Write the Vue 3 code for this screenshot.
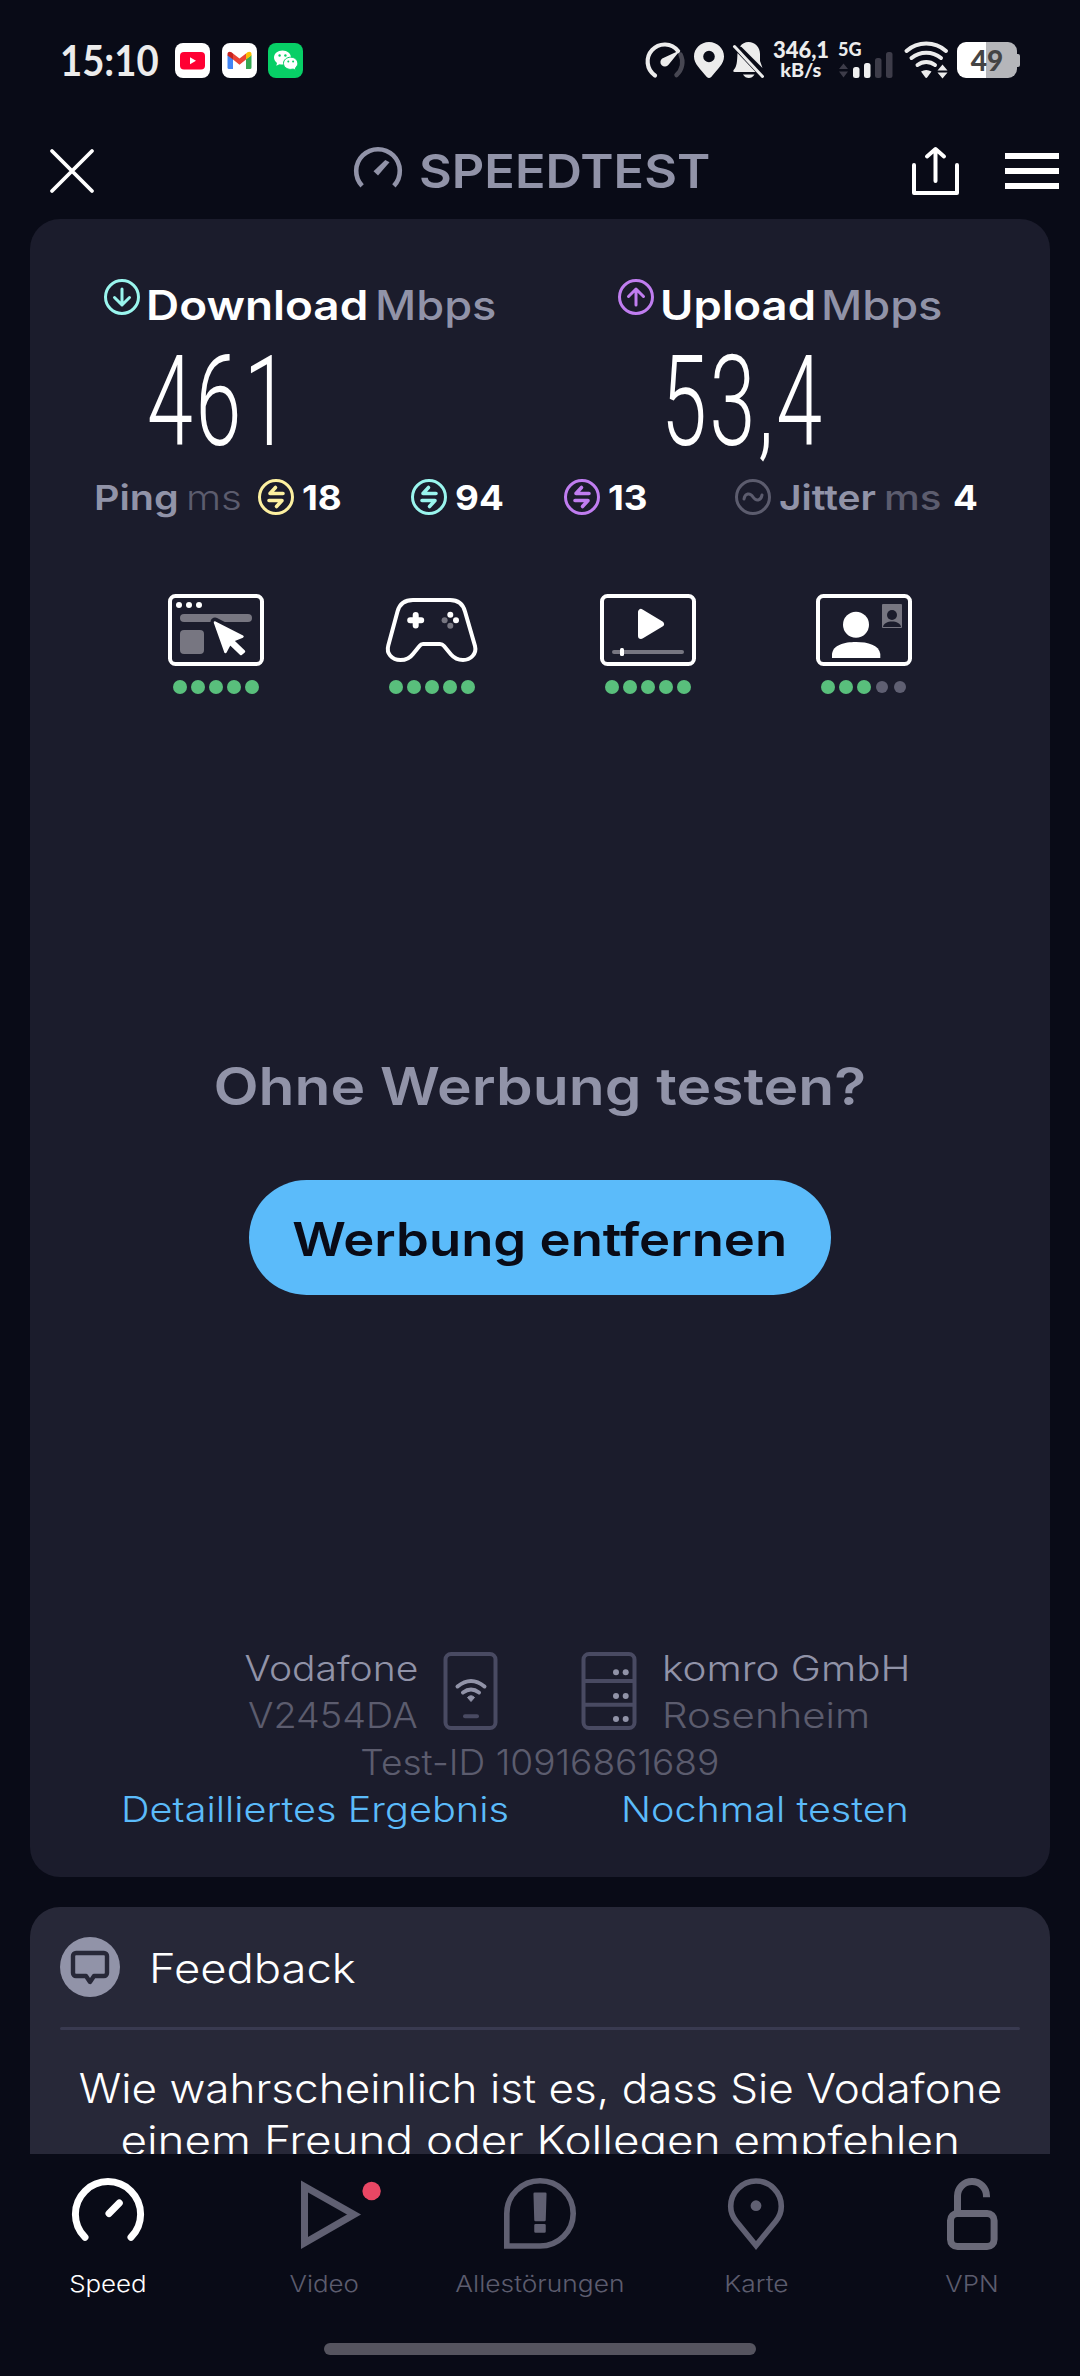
<template>
  <div class="app-root">
    <!-- Status bar -->
    <header class="status-bar">
      <span class="clock t">15:10</span>
      <div class="notifications">
        <svg class="app-icon" viewBox="0 0 35 35">
          <rect width="35" height="35" rx="8" fill="#fff" />
          <rect x="5" y="9" width="25" height="17.5" rx="4" fill="#ff0033" />
          <path d="M15 14.2L21 17.7L15 21.2Z" fill="#fff" />
        </svg>
        <svg class="app-icon" viewBox="0 0 35 35">
          <rect width="35" height="35" rx="8" fill="#fff" />
          <path d="M5.5 12V24.5a1.5 1.5 0 0 0 1.5 1.5H11V16Z" fill="#4285f4" />
          <path d="M29.5 12V24.5a1.5 1.5 0 0 1-1.5 1.5H24V16Z" fill="#34a853" />
          <path d="M11 16.5V10.5L17.5 15.5L24 10.5V16.5L17.5 21.8Z" fill="#ea4335" />
          <path d="M5.5 12.5V11C5.5 8.6 8 8.2 9.5 9.3L11 10.5V16.5Z" fill="#c5221f" />
          <path d="M29.5 12.5V11C29.5 8.6 27 8.2 25.5 9.3L24 10.5V16.5Z" fill="#fbbc04" />
        </svg>
        <svg class="app-icon" viewBox="0 0 35 35">
          <rect width="35" height="35" rx="8" fill="#07cf66" />
          <path d="M14.5 7.5C9.8 7.5 6 10.6 6 14.6c0 2.2 1.2 4.1 3 5.4L8.3 22.8L11.5 21.2c1 .3 2 .4 3 .4 4.7 0 8.5-3 8.5-7S19.2 7.5 14.5 7.5Z" fill="#fff" />
          <path d="M22.7 14.2c-4 0-7.2 2.7-7.2 6.1s3.2 6.1 7.2 6.1c.9 0 1.7-.1 2.5-.3L27.9 27.4L27.3 25c1.5-1.1 2.5-2.8 2.5-4.7 0-3.4-3.2-6.1-7.1-6.1Z" fill="#fff" stroke="#07cf66" />
          <g fill="#07cf66">
            <circle cx="11.6" cy="12.5" r="1.2" /><circle cx="17.4" cy="12.5" r="1.2" />
            <circle cx="20.3" cy="18.6" r="1" /><circle cx="25.1" cy="18.6" r="1" />
          </g>
        </svg>
      </div>

      <div class="system-icons">
        <svg class="sys-gauge" viewBox="0 0 39 36">
          <path d="M34.5 12.5A17 17 0 0 1 30.5 33" fill="none" stroke="#474752" stroke-width="4.5" stroke-linecap="round" />
          <path d="M9 33.5A17 17 0 1 1 32 9" fill="none" stroke="#ececec" stroke-width="4.2" stroke-linecap="round" />
          <path d="M34.5 8L22.5 22.8A4.5 4.5 0 1 1 16.2 16.5Z" fill="#ececec" />
        </svg>
        <svg class="sys-pin" viewBox="0 0 30 36">
          <path fill-rule="evenodd" d="M15 0C6.7 0 0 6.5 0 14.5C0 22 6.5 27 12.8 35Q15 37.2 17.2 35C23.5 27 30 22 30 14.5C30 6.5 23.3 0 15 0ZM15 8.7a5.8 5.8 0 1 1 0 11.6a5.8 5.8 0 0 1 0-11.6Z" fill="#ececec" />
        </svg>
        <svg class="sys-bell" viewBox="0 0 31 36">
          <path d="M7 4.5C9 1.5 12 0 15.5 0C22 0 27 5 27 12V19L29.5 26L8.5 5Z" fill="#ececec" />
          <path d="M4.5 11L22.5 30H1.5C0 30 0 28.5 1 27.5C4 24 4 20 4.5 11Z" fill="#ececec" />
          <path d="M10 32.5H21.5C20 35 18 36 15.8 36C13.5 36 11.5 35 10 32.5Z" fill="#ececec" />
          <path d="M1.5 4.5L29.5 34.5" stroke="#ececec" stroke-width="3" stroke-linecap="round" />
        </svg>
        <div class="net-speed">
          <span class="net-value t">346,1</span>
          <span class="net-unit t">kB/s</span>
        </div>
        <div class="cell">
          <span class="cell-type t">5G</span>
          <svg class="cell-bars" viewBox="0 0 55 26">
            <path d="M5.5 11.5L10 17H1ZM1 19.5H10L5.5 25.5Z" fill="#3d3c49" />
            <rect x="15" y="15" width="6.5" height="11" rx="2.5" fill="#f0f0f0" />
            <rect x="26" y="11" width="6.5" height="15" rx="2.5" fill="#f0f0f0" />
            <rect x="37" y="6" width="6.5" height="20" rx="2.5" fill="#3d3c49" />
            <rect x="48" y="0" width="6.5" height="26" rx="2.5" fill="#3d3c49" />
          </svg>
        </div>
        <svg class="sys-wifi" viewBox="0 0 45 36">
          <g fill="none" stroke="#ececec" stroke-width="4" stroke-linecap="round">
            <path d="M2.5 9A30 30 0 0 1 42 9" />
            <path d="M7.5 16A23 23 0 0 1 37 16" />
            <path d="M13.5 23A14.5 14.5 0 0 1 31 23" />
          </g>
          <path d="M17 29.5Q22.2 26.5 27.5 29.5L23.5 35Q22.2 37 21 35Z" fill="#ececec" />
          <path d="M38.5 22.5L43.5 28.5H33.5ZM33.5 30.5H43.5L38.5 36.5Z" fill="#ececec" />
        </svg>
        <div class="battery">
          <span class="battery-level t">49</span>
        </div>
      </div>
    </header>

    <!-- App bar -->
    <div class="app-bar">
      <svg class="close" viewBox="0 0 44 44">
        <path d="M2 2L42 42M42 2L2 42" stroke="#fff" stroke-width="3.8" stroke-linecap="round" />
      </svg>
      <div class="brand">
        <svg class="brand-icon" viewBox="0 0 48 48">
          <path d="M8.1 38.9A21.8 21.8 0 1 1 39.9 38.9" fill="none" stroke="#9193a8" stroke-width="4.6" />
          <path d="M31.3 13L35.5 15.3L24 28.5L19.5 24.3Z" fill="#9193a8" />
        </svg>
        <span class="brand-name t">SPEEDTEST</span>
      </div>
      <svg class="share" viewBox="0 0 48 48">
        <path d="M2 18V46H45V18M23.5 34V3M15 9.5L23.5 2L32 9.5" fill="none" stroke="#fff" stroke-width="4" stroke-linecap="round" stroke-linejoin="round" />
      </svg>
      <div class="menu"><i></i><i></i><i></i></div>
    </div>

    <main class="scroll-area">
      <!-- Result card -->
      <section class="result-card">
        <div class="speeds">
          <div v-for="s in speeds" :key="s.label" class="speed">
            <div class="speed-head">
              <svg class="ring" :class="s.tone" viewBox="0 0 36 36">
                <circle cx="18" cy="18" r="16.5" />
                <path :d="s.arrow" />
              </svg>
              <span class="speed-label t" :class="s.cls">{{ s.label }}</span>
              <span class="speed-unit t">Mbps</span>
            </div>
            <div class="speed-value"><span class="digits">{{ s.value }}</span></div>
          </div>
        </div>

        <div class="latency">
          <div class="latency-title">
            <span class="strong-label ping t">Ping</span>
            <span class="light-unit t">ms</span>
          </div>
          <div v-for="p in pings" :key="p.tone" class="latency-item">
            <svg class="ring" :class="p.tone" viewBox="0 0 36 36">
              <circle cx="18" cy="18" r="16.5" />
              <path class="swap" d="M25 14.5H12L17.5 8.5M11 21.5H24L18.5 27.5" />
            </svg>
            <span class="latency-value t">{{ p.value }}</span>
          </div>
          <div class="latency-item">
            <svg class="ring muted" viewBox="0 0 36 36">
              <circle cx="18" cy="18" r="16.5" />
              <path d="M9 20C10 14 15 13.5 18 18S26 22 27 16" />
            </svg>
            <span class="strong-label jitter t">Jitter</span>
            <span class="medium-unit t">ms</span>
            <span class="latency-value jitter-value t">4</span>
          </div>
        </div>

        <!-- Quality ratings -->
        <div class="ratings">
          <div v-for="r in ratings" :key="r.kind" class="rating">
            <svg class="rating-icon" viewBox="0 0 96 72">
              <rect v-if="r.kind !== 'gaming'" x="2" y="2" width="92" height="68" rx="5.5" fill="none" stroke="#fff" stroke-width="4" />
              <template v-if="r.kind === 'web'">
                <g fill="#fff"><circle cx="11" cy="11" r="3" /><circle cx="21" cy="11" r="3" /><circle cx="31" cy="11" r="3" /></g>
                <rect x="12" y="20" width="72" height="8" rx="4" fill="#777681" />
                <rect x="12" y="36" width="24" height="24" rx="4" fill="#777681" />
                <path d="M47 28L75 42.5L66 46.5L76.5 57L73 60.5L62.5 50L58 58Z" fill="none" stroke="#1b1c2c" stroke-width="9" stroke-linejoin="round" />
                <path d="M47 28.5L74.5 42.5L64.5 46.5L76 57.5L73 60L62 49.5L57.5 58Z" fill="#fff" stroke="#fff" stroke-width="2.5" stroke-linejoin="round" />
              </template>
              <template v-else-if="r.kind === 'gaming'">
                <path d="M29 6H66C73.5 6 79 10 81 17.5L91 52C93 60 86.5 66 79 66C73.5 66 70 64 67 60.5L60 52Q58.3 50 56 50H39Q37 50 35.5 52L29 60C26 64 21.5 66 16.5 66C8 66 2 59.5 4.3 51.5L13.5 17.5C15.5 10 21 6 29 6Z" fill="none" stroke="#fff" stroke-width="4" />
                <path d="M31.7 21V31.5M26.2 26.3H37.2" stroke="#fff" stroke-width="6" stroke-linecap="round" />
                <g fill="#fff"><circle cx="66.3" cy="20.7" r="3" /><circle cx="72" cy="26.3" r="3" /></g>
                <g fill="#777681"><circle cx="60.6" cy="26.3" r="3" /><circle cx="66.3" cy="31.7" r="3" /></g>
              </template>
              <template v-else-if="r.kind === 'video'">
                <path d="M41 18V42L61 30Z" fill="#fff" stroke="#fff" stroke-width="6" stroke-linejoin="round" />
                <rect x="12" y="56" width="72" height="4" rx="2" fill="#777681" />
                <rect x="20" y="54" width="4" height="8" rx="1.5" fill="#fff" />
              </template>
              <template v-else>
                <circle cx="40" cy="30.7" r="13" fill="#fff" />
                <path d="M16 64V60C17 51 28 48 40 48S63 51 64.3 60V64Z" fill="#fff" />
                <rect x="66" y="10" width="20" height="24" rx="1" fill="#777681" />
                <circle cx="76" cy="21" r="5" fill="#1b1c2c" />
                <path d="M67 33C67.5 25.5 84.5 25.5 85 33Z" fill="#1b1c2c" />
              </template>
            </svg>
            <div class="dots">
              <span v-for="n in 5" :key="n" class="dot" :class="{ filled: n <= r.score }"></span>
            </div>
          </div>
        </div>

        <!-- Ad removal -->
        <div class="promo">
          <h2 class="promo-title t">Ohne Werbung testen?</h2>
          <button class="promo-btn"><span class="promo-text t">Werbung entfernen</span></button>
        </div>

        <!-- Connection info -->
        <div class="connection">
          <div class="hosts">
            <div class="host client">
              <span class="host-name vodafone t">Vodafone</span>
              <span class="host-sub model t">V2454DA</span>
            </div>
            <svg class="phone" viewBox="0 0 55 78">
              <rect x="2.5" y="2" width="50" height="74" rx="5.5" fill="none" stroke="#494a62" stroke-width="4" />
              <path d="M14.5 34.5Q28 23.5 41.5 34.5M20 40.5Q28 34.5 36 40.5" fill="none" stroke="#9193a8" stroke-width="4" stroke-linecap="round" />
              <path d="M24.5 45.5Q28 42 31.5 45.5L28 49.5Z" fill="#9193a8" stroke="#9193a8" stroke-linejoin="round" />
              <rect x="20" y="62.3" width="16" height="4" rx="2" fill="#494a62" />
            </svg>
            <svg class="server" viewBox="0 0 56 78">
              <path d="M2 29H54M2 52.7H54" stroke="#494a62" stroke-width="4" />
              <rect x="2.5" y="2" width="51" height="74" rx="5.5" fill="none" stroke="#494a62" stroke-width="4" />
              <g fill="#9193a8">
                <circle v-for="c in serverDots" :key="c.x + '-' + c.y" :cx="c.x" :cy="c.y" r="3" />
              </g>
            </svg>
            <div class="host">
              <span class="host-name komro t">komro GmbH</span>
              <span class="host-sub city t">Rosenheim</span>
            </div>
          </div>
          <div class="test-id"><span class="test-number t">Test-ID 10916861689</span></div>
          <div class="links">
            <a class="link detail t">Detailliertes Ergebnis</a>
            <a class="link again t">Nochmal testen</a>
          </div>
        </div>
      </section>

      <!-- Feedback card -->
      <section class="feedback-card">
        <div class="feedback-head">
          <svg class="feedback-icon" viewBox="0 0 60 60">
            <circle cx="30" cy="30" r="30" fill="#9193a8" />
            <path d="M16 16H44a3 3 0 0 1 3 3V36a3 3 0 0 1-3 3H34L30 45L26 39H16a3 3 0 0 1-3-3V19a3 3 0 0 1 3-3Z" fill="none" stroke="#272838" stroke-width="4.4" stroke-linejoin="round" />
          </svg>
          <span class="feedback-title t">Feedback</span>
        </div>
        <div class="divider"></div>
        <p class="question">
          <span class="question-first t">Wie wahrscheinlich ist es, dass Sie Vodafone</span>
          <span class="question-second t">einem Freund oder Kollegen empfehlen</span>
        </p>
      </section>
    </main>

    <!-- Bottom navigation -->
    <nav class="bottom-nav">
      <div class="tabs">
        <a class="tab active">
          <svg class="tab-icon" viewBox="0 0 72 72">
            <path d="M13 59.3A32.6 32.6 0 1 1 59 59.3M37 35.5L47.3 25" fill="none" stroke="#fff" stroke-width="7" stroke-linecap="round" />
          </svg>
          <span class="tab-label t">Speed</span>
        </a>
        <a class="tab">
          <svg class="tab-icon" viewBox="0 0 72 72">
            <path d="M16.5 8.5L66 36.5L16.5 65Z" fill="none" stroke="#606072" stroke-width="7" />
            <circle cx="83.6" cy="13" r="9.2" fill="#ea4764" />
          </svg>
          <span class="tab-label t">Video</span>
        </a>
        <a class="tab">
          <svg class="tab-icon" viewBox="0 0 72 72">
            <path d="M2.8 68V35.5a33.2 32.7 0 0 1 66.4 0A33.2 32.5 0 0 1 36 68Z" fill="none" stroke="#606072" stroke-width="5.6" />
            <path d="M30.7 15.7H41.3L40.5 42H31.5ZM31.5 47.3H40.5V53.5H31.5Z" fill="#606072" stroke="#606072" stroke-width="2.5" stroke-linejoin="round" />
          </svg>
          <span class="tab-label wide t">Allestörungen</span>
        </a>
        <a class="tab">
          <svg class="tab-icon" viewBox="0 0 72 72">
            <path d="M36 67.5L16 43C12 38 10.7 33 10.7 28.3a25.3 25.3 0 0 1 50.6 0C61.3 33 60 38 56 43Z" fill="none" stroke="#606072" stroke-width="5.6" />
            <circle cx="36" cy="27.7" r="5.4" fill="#606072" />
          </svg>
          <span class="tab-label wide t">Karte</span>
        </a>
        <a class="tab">
          <svg class="tab-icon" viewBox="0 0 72 72">
            <rect x="14.5" y="35.5" width="43.6" height="33" rx="7" fill="none" stroke="#696978" stroke-width="7" />
            <path d="M21.5 33V18A14.5 14.5 0 0 1 50.5 18V19.3" fill="none" stroke="#696978" stroke-width="7" />
          </svg>
          <span class="tab-label t">VPN</span>
        </a>
      </div>
      <div class="home-bar"></div>
    </nav>
  </div>
</template>

<script setup>
const speeds = [
  { label: "Download", value: "461", tone: "cyan", cls: "down", arrow: "M18 10V26M10.5 18.5L18 26L25.5 18.5" },
  { label: "Upload", value: "53,4", tone: "violet", cls: "up", arrow: "M18 26V10M10.5 17.5L18 10L25.5 17.5" },
];

const pings = [
  { tone: "yellow", value: 18 },
  { tone: "cyan", value: 94 },
  { tone: "violet", value: 13 },
];

const ratings = [
  { kind: "web", score: 5 },
  { kind: "gaming", score: 5 },
  { kind: "video", score: 5 },
  { kind: "call", score: 3 },
];

const serverDots = [20.3, 44, 67].flatMap((y) => [{ x: 35, y }, { x: 44.7, y }]);
</script>

<style>
html,
body {
  margin: 0;
  padding: 0;
  background: #090b17;
}
</style>

<style scoped>
.app-root {
  width: 1080px;
  height: 2376px;
  display: flex;
  flex-direction: column;
  overflow: hidden;
  background: #090b17;
  color: #fff;
  font-family: Inter, "Open Sans", sans-serif;
}

svg {
  display: block;
  flex: none;
  overflow: visible;
}

/* Stretched lettering, --w is the horizontal factor */
.t {
  display: inline-block;
  white-space: nowrap;
  transform: scaleX(var(--w, 1));
  transform-origin: left;
}

/* Status bar */
.status-bar {
  display: flex;
  align-items: center;
  height: 120px;
  padding: 0 60px;
  box-sizing: border-box;
  color: #ececec;
  flex: none;
}
.clock {
  --w: 0.9;
  width: 115px;
  margin-top: -2px;
  font-family: Lato, sans-serif;
  font-size: 42.5px;
  font-weight: 700;
}
.notifications {
  display: flex;
  gap: 11.5px;
}
.app-icon {
  width: 35px;
  height: 35px;
}
.system-icons {
  display: flex;
  align-items: center;
  margin-left: auto;
}
.sys-gauge {
  width: 39px;
  height: 36px;
}
.sys-pin {
  width: 30px;
  height: 36px;
  margin-left: 9px;
}
.sys-bell {
  width: 31px;
  height: 36px;
  margin-left: 9px;
}
.net-speed {
  width: 58px;
  margin-left: 8px;
  display: flex;
  flex-direction: column;
  align-items: center;
  font-family: Lato, sans-serif;
  font-weight: 900;
}
.net-value {
  font-size: 22px;
  line-height: 20px;
}
.net-unit {
  --w: 1.1;
  transform-origin: center;
  font-size: 18px;
  line-height: 20px;
}
.cell {
  width: 56px;
  height: 36px;
  margin-left: 8px;
  display: flex;
  flex-direction: column;
}
.cell-type {
  font-family: Lato, sans-serif;
  font-size: 18px;
  font-weight: 900;
  line-height: 14px;
  height: 10px;
}
.cell-bars {
  width: 55px;
  height: 26px;
}
.sys-wifi {
  width: 45px;
  height: 36px;
  margin-left: 10px;
}
.battery {
  position: relative;
  width: 60px;
  height: 36px;
  margin: 0 3px 0 8px;
  border-radius: 9px;
  background: linear-gradient(90deg, #fff 29px, #b5b6ba 29px);
  display: flex;
  align-items: center;
  justify-content: center;
}
.battery::after {
  content: "";
  position: absolute;
  right: -3px;
  top: 12px;
  width: 3px;
  height: 13px;
  border-radius: 0 2px 2px 0;
  background: #b5b6ba;
}
.battery-level {
  font-family: Lato, sans-serif;
  font-size: 28px;
  font-weight: 900;
  color: #444;
}

/* App bar */
.app-bar {
  display: flex;
  align-items: center;
  height: 99px;
  padding: 3px 21px 0 50px;
  box-sizing: border-box;
  flex: none;
}
.close {
  width: 44px;
  height: 44px;
}
.brand {
  display: flex;
  align-items: center;
  margin-left: 260px;
  width: 558px;
}
.brand-icon {
  width: 48px;
  height: 48px;
}
.brand-name {
  --w: 1.085;
  margin-left: 17px;
  font-size: 46.5px;
  font-weight: 600;
  color: #9193a8;
}
.share {
  width: 48px;
  height: 48px;
}
.menu {
  width: 54px;
  margin-left: 45px;
  display: flex;
  flex-direction: column;
  gap: 9px;
}
.menu i {
  height: 6px;
  background: #fff;
}

.scroll-area {
  flex: 1;
  min-height: 0;
  overflow: hidden;
  padding: 0 30px;
}

/* Result card */
.result-card {
  display: flex;
  flex-direction: column;
  height: 1658px;
  padding: 60px 0 44px;
  box-sizing: border-box;
  border-radius: 30px;
  background: #1b1c2c;
}
.speeds {
  display: grid;
  grid-template-columns: 514px 1fr;
  padding-left: 74px;
}
.speed-head {
  display: flex;
  height: 52px;
}
.ring {
  width: 36px;
  height: 36px;
  fill: none;
  stroke: currentColor;
  stroke-width: 3;
  stroke-linecap: round;
  stroke-linejoin: round;
}
.ring .swap {
  stroke-width: 3.6;
}
.cyan {
  color: #9af5ee;
}
.violet {
  color: #c07df0;
}
.yellow {
  color: #fdf0a0;
}
.muted {
  color: #5c5c6e;
}
.speed-label {
  margin-left: 5.5px;
  font-size: 40.5px;
  font-weight: 600;
  line-height: 54px;
}
.down {
  --w: 1.133;
  margin-right: 33.5px;
}
.up {
  --w: 1.12;
  margin-right: 22.5px;
}
.speed-unit {
  --w: 1.115;
  font-size: 40.5px;
  font-weight: 500;
  line-height: 54px;
  color: #9193a8;
}
.speed-value {
  height: 120px;
  margin: 8px 0 0 43px;
  font-family: Roboto, sans-serif;
  font-size: 127px;
  font-weight: 300;
  line-height: 126px;
}
.digits {
  display: inline-block;
  letter-spacing: 4px;
  transform: scaleX(0.65);
  transform-origin: left;
}

.latency {
  display: grid;
  grid-template-columns: 164px 153px 153px 171px 1fr;
  align-items: center;
  height: 36px;
  margin-top: 20px;
  padding-left: 64px;
  line-height: 36px;
}
.latency-title,
.latency-item {
  display: flex;
  align-items: center;
}
.strong-label {
  font-size: 34.7px;
  font-weight: 600;
  color: #9193a8;
}
.ping {
  --w: 1.14;
}
.jitter {
  --w: 1.12;
  margin-left: 8px;
}
.light-unit,
.medium-unit {
  --w: 1.16;
  margin-left: 18px;
  font-size: 34.7px;
  font-weight: 300;
  color: #5c5c6e;
}
.medium-unit {
  font-weight: 500;
}
.latency-value {
  --w: 1.06;
  margin-left: 8px;
  font-size: 34.7px;
  font-weight: 700;
}
.jitter-value {
  margin-left: 20px;
}

/* Quality ratings */
.ratings {
  display: grid;
  grid-template-columns: repeat(4, 216px);
  justify-content: center;
  margin-top: 79px;
}
.rating {
  display: flex;
  flex-direction: column;
  align-items: center;
}
.rating-icon {
  width: 96px;
  height: 72px;
}
.dots {
  display: flex;
  gap: 4px;
  margin-top: 14px;
}
.dot {
  width: 14px;
  height: 14px;
  border-radius: 50%;
  background: #5f5f72;
  transform: scale(0.86);
}
.dot.filled {
  background: #59bf7c;
  transform: none;
}

/* Ad removal */
.promo {
  display: flex;
  flex-direction: column;
  align-items: center;
  margin-top: 361px;
}
.promo-title {
  --w: 1.13;
  transform-origin: center;
  margin: 0;
  font-size: 52px;
  font-weight: 600;
  line-height: 64px;
  color: #9193a8;
}
.promo-btn {
  width: 582px;
  height: 115px;
  margin-top: 61px;
  padding: 2px 0 0;
  border: none;
  border-radius: 58px;
  background: #5bbbfa;
  color: #090b17;
  font-family: inherit;
  font-size: 46.3px;
  font-weight: 600;
  line-height: 60px;
}
.promo-text {
  --w: 1.137;
  transform-origin: center;
}

/* Connection info */
.connection {
  margin-top: auto;
  font-size: 34.7px;
  font-weight: 300;
  line-height: 47px;
}
.hosts {
  display: flex;
  align-items: center;
}
.host {
  display: flex;
  flex-direction: column;
  align-items: flex-start;
}
.client {
  width: 388px;
  align-items: flex-end;
}
.client .t {
  transform-origin: right;
}
.host-name {
  color: #9193a8;
}
.host-sub,
.test-id {
  color: #5c5c6e;
}
.vodafone {
  --w: 1.126;
}
.model {
  --w: 1.09;
}
.komro {
  --w: 1.165;
}
.city {
  --w: 1.16;
}
.phone {
  width: 55px;
  height: 78px;
  margin: -2px 0 0 25px;
}
.server {
  width: 56px;
  height: 78px;
  margin: -2px 25px 0 83px;
}
.test-id {
  text-align: center;
}
.test-number {
  --w: 1.07;
  transform-origin: center;
}
.links {
  display: flex;
  padding-left: 91px;
}
.link {
  color: #5bbbfa;
}
.detail {
  --w: 1.145;
  margin-right: 161px;
}
.again {
  --w: 1.14;
}

/* Feedback card */
.feedback-card {
  height: 400px;
  margin-top: 30px;
  padding: 30px;
  box-sizing: border-box;
  border-radius: 30px;
  background: #272838;
}
.feedback-head {
  display: flex;
  align-items: center;
}
.feedback-icon {
  width: 60px;
  height: 60px;
}
.feedback-title {
  --w: 1.12;
  margin: 2px 0 0 29px;
  font-size: 40.5px;
  font-weight: 350;
}
.divider {
  height: 3px;
  margin-top: 30px;
  border-radius: 2px;
  background: #393a50;
}
.question {
  display: flex;
  flex-direction: column;
  align-items: center;
  margin: 33px 0 0;
  font-size: 40.5px;
  font-weight: 350;
  line-height: 52px;
}
.question .t {
  transform-origin: center;
}
.question-first {
  --w: 1.088;
}
.question-second {
  --w: 1.131;
}

/* Bottom navigation */
.bottom-nav {
  flex: none;
  height: 222px;
  padding-top: 24px;
  box-sizing: border-box;
}
.tabs {
  display: grid;
  grid-template-columns: repeat(5, 216px);
}
.tab {
  display: flex;
  flex-direction: column;
  align-items: center;
  color: #5c5c6e;
}
.tab.active {
  color: #fff;
}
.tab-icon {
  width: 72px;
  height: 72px;
}
.tab-label {
  --w: 1.11;
  transform-origin: center;
  margin-top: 19px;
  font-size: 23.3px;
  font-weight: 350;
  line-height: 30px;
}
.wide {
  --w: 1.13;
}
.home-bar {
  width: 432px;
  height: 12px;
  margin: 44px auto 0;
  border-radius: 6px;
  background: #55545f;
}
</style>
